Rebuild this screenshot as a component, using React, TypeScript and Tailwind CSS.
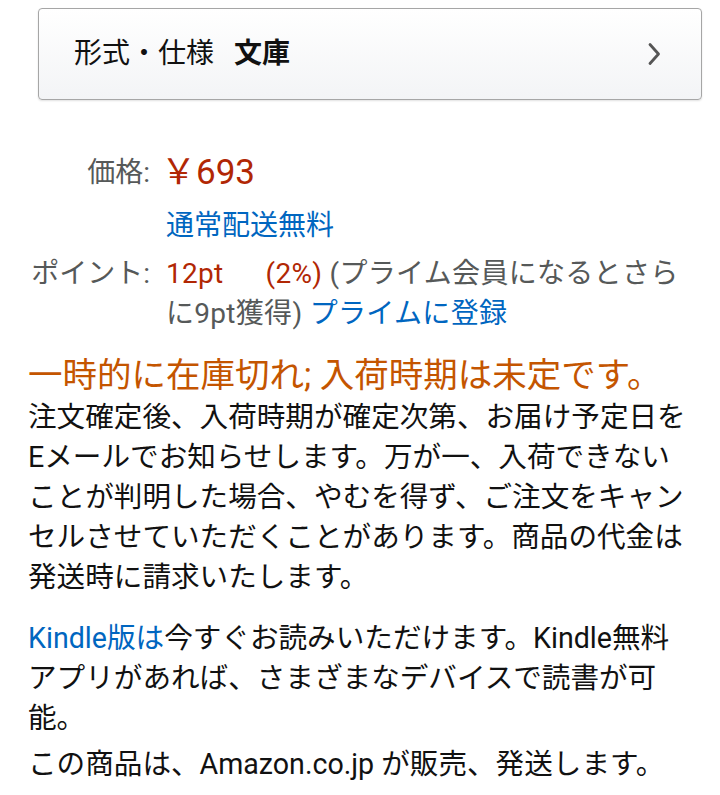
const font = "[font-family:Roboto,'Noto_Sans_CJK_JP',sans-serif]";

function Chevron() {
  return (
    <svg width="14" height="24" viewBox="0 0 14 24" fill="none" className="text-[#555]">
      <path d="M3 2.5 L11.5 12 L3 21.5" stroke="currentColor" strokeWidth="2.8" strokeLinecap="round" strokeLinejoin="round" />
    </svg>
  );
}

export default function App() {
  return (
    <main className={`${font} min-h-[795px] w-[720px] bg-white pt-2 text-[#111]`}>
      <button className="ml-[38px] flex h-[92px] w-[664px] items-center justify-between rounded-[4px] border border-[#a6a6a6] bg-gradient-to-b from-[#ffffff] to-[#f3f4f6] pl-[35px] pr-[40px] shadow-[0_1px_2px_rgba(0,0,0,0.12)]">
        <span className="text-[28px] leading-none text-[#111]">
          形式・仕様<span className="ml-[20px] font-bold">文庫</span>
        </span>
        <Chevron />
      </button>

      <section className="mt-[50px] grid grid-cols-[150px_1fr] gap-x-4 text-[28px]">
        <div className="h-[46px] text-right leading-[46px] text-[#565959]">価格:</div>
        <div className="-ml-[5px] h-[46px] text-[35px] leading-[46px] text-[#B12704]">￥693</div>

        <div />
        <div className="mt-[10px] leading-[40px] text-[#0066C0]">通常配送無料</div>

        <div className="mt-[8px] text-right leading-[40px] whitespace-nowrap text-[#565959]">ポイント:</div>
        <div className="mt-[8px] leading-[40px] whitespace-nowrap text-[#565959] tracking-[0.3px]">
          <span className="text-[#B12704]">12pt</span>
          <span className="ml-[42px] text-[#B12704]">(2%)</span> (プライム会員になるとさら
          <br />
          に9pt獲得) <span className="text-[#0066C0]">プライムに登録</span>
        </div>
      </section>

      <section className="px-7">
        <h2 className="mt-[19px] text-[34.5px] leading-[44px] whitespace-nowrap text-[#C45500]">
          一時的に在庫切れ; 入荷時期は未定です。
        </h2>
        <p className="text-[28.6px] leading-[40px] whitespace-nowrap">
          注文確定後、入荷時期が確定次第、お届け予定日を
          <br />
          Eメールでお知らせします。万が一、入荷できない
          <br />
          ことが判明した場合、やむを得ず、ご注文をキャン
          <br />
          セルさせていただくことがあります。商品の代金は
          <br />
          発送時に請求いたします。
        </p>

        <p className="mt-[21px] text-[28.6px] leading-[40px] whitespace-nowrap">
          <span className="text-[#0066C0]">Kindle版は</span>今すぐお読みいただけます。Kindle無料
          <br />
          アプリがあれば、さまざまなデバイスで読書が可
          <br />
          能。
        </p>
        <p className="mt-[6px] text-[28.6px] leading-[40px] whitespace-nowrap">
          この商品は、Amazon.co.jp が販売、発送します。
        </p>
      </section>
    </main>
  );
}
